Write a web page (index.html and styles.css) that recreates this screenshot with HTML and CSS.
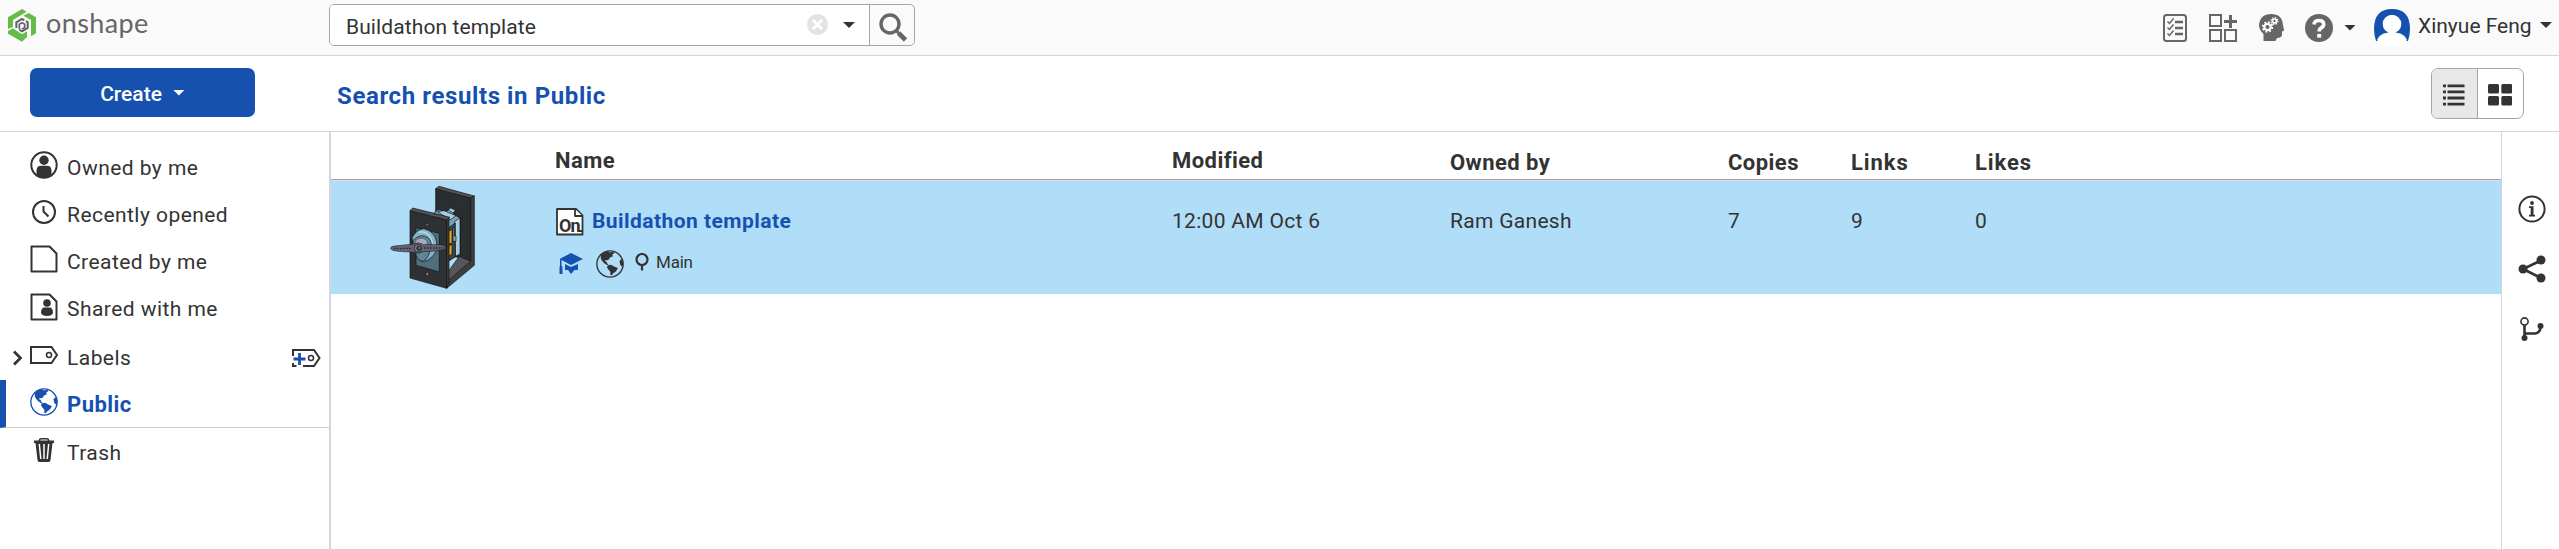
FILE: index.html
```html
<!DOCTYPE html>
<html lang="en">
<head>
<meta charset="utf-8">
<title>Onshape</title>
<link rel="stylesheet" href="styles.css">
</head>
<body>
<svg class="defs" aria-hidden="true">
  <symbol id="globe" viewBox="0 0 82 82">
    <circle cx="41" cy="41" r="38.5" fill="none" stroke="currentColor" stroke-width="4"/>
    <path fill="currentColor" d="M14 13 24 7 36 3 40 7 50 5 54 9 47 14 50 18 42 21 38 27 35 30 28 29 27 34 33 35 31 39 37 42 33 45 24 39 17 31 14 24z"/>
    <path fill="currentColor" d="M35 45 44 43 53 48 64 53 59 62 51 68 46 74 42 73 42 64 35 56 32 50z"/>
    <path fill="currentColor" d="M73 27 79 31 80 42 77 50 71 43 69 34z"/>
  </symbol>
</svg>

<header class="topbar">
  <div class="brand">
    <svg class="logo" width="28" height="33" viewBox="0 0 84 99">
      <path fill="#65bc46" d="M0 25 42 0 56 8 15 33V53L0 60z"/>
      <path fill="#65bc46" d="M62 12 84 25V73L69 82V33L46 20z"/>
      <path fill="#65bc46" d="M0 66 15 58 42 76 57 67V84L42 98 0 74z"/>
      <path fill="none" stroke="#606060" stroke-width="6" d="M25 57V40L42 30 49 34M54 36 59 40V57L42 67 34 62"/>
      <path fill="none" stroke="#606060" stroke-width="5" d="M34 60V46L42 41 50 46V56L42 60"/>
    </svg>
    <span class="wordmark">onshape</span>
  </div>
  <div class="search">
    <div class="search-input">
      <span class="query">Buildathon template</span>
      <svg class="clear" width="21" height="21" viewBox="0 0 21 21"><circle cx="10.5" cy="10.5" r="10.5" fill="#e3e3e3"/><path d="M6 6 15 15M15 6 6 15" stroke="#fff" stroke-width="3"/></svg>
      <i class="caret"></i>
    </div>
    <div class="search-button">
      <svg width="29" height="29" viewBox="0 0 29 29" fill="none" stroke="#666"><circle cx="11" cy="11" r="9" stroke-width="3.4"/><path d="M17 17.500 19.500 20" stroke-width="3"/><path d="M19.500 20 26.500 27" stroke-width="4.600"/></svg>
    </div>
  </div>
  <div class="account">
    <svg width="24" height="28" viewBox="0 0 24 28" fill="none" stroke="#666"><rect x="1" y="1" width="22" height="26" rx="2.500" stroke-width="2"/><path d="M4.500 7.500 6.500 9.500 10.500 4.500M4.500 13.500 6.500 15.500 10.500 10.500M4.500 19.500 6.500 21.500 10.500 16.500" stroke-width="1.500"/><path d="M12 8H20M12 14H20M12 20H20" stroke-width="2.600"/></svg>
    <svg class="apps" width="28" height="28" viewBox="0 0 28 28" fill="none" stroke="#666" stroke-width="2"><path d="M1 1H12V12H1zM1 16H12V27H1zM16 16H27V27H16z"/><path d="M21.500 1V14M15 7.500H28" stroke-width="3"/></svg>
    <svg class="learn" width="26" height="28" viewBox="0 0 26 28"><path fill="#666" d="M4.500 27V20Q0 16 0 11 1 0 12.500 0 23 0 24 11L25 16Q25 17 23 17.500V21Q23 23.500 18 24L16.500 27z"/><g fill="none" stroke="#fff"><circle cx="8.500" cy="13" r="3.200" stroke-width="2.200"/><circle cx="8.500" cy="13" r="4.800" stroke-width="1.800" stroke-dasharray="1.900 1.870"/><circle cx="15.500" cy="7" r="2" stroke-width="1.700"/><circle cx="15.500" cy="7" r="3.300" stroke-width="1.400" stroke-dasharray="1.300 1.290"/></g></svg>
    <svg class="help" width="28" height="28" viewBox="0 0 28 28"><circle cx="14" cy="14" r="14" fill="#666"/><path d="M9 10.500Q9.300 6.500 14 6.500 18.700 6.500 18.700 10.300 18.700 12.500 16.200 13.900 14.200 15 14.200 17.600" fill="none" stroke="#fff" stroke-width="3.600"/><path d="M12.200 20H16.200V23.600H12.200z" fill="#fff"/></svg>
    <i class="caret help-caret"></i>
    <svg class="avatar" width="36" height="37" viewBox="0 0 36 37"><path fill="#1651b0" d="M2 32Q0 26 0 20 0 0 18 0 36 0 36 20 36 26 34 32z"/><path fill="#fff" d="M3 31Q5 25 14 23.500H22Q31 25 33 31 30 37 18 37 6 37 3 31z"/><circle cx="18" cy="15" r="9.300" fill="#fff"/></svg>
    <span class="username">Xinyue Feng</span>
    <i class="caret"></i>
  </div>
</header>

<div class="toolbar">
  <button class="create">Create<i class="caret light"></i></button>
  <h1 class="heading">Search results in Public</h1>
  <div class="view-toggle">
    <div class="view active"><svg width="22" height="22" viewBox="0 0 22 22" stroke="#333" stroke-width="2.800"><path d="M0 1.800H3M0 7.900H3M0 14H3M0 20.100H3M4.500 1.800H21.500M4.500 7.900H21.500M4.500 14H21.500M4.500 20.100H21.500"/></svg></div>
    <div class="view"><svg width="24" height="22" viewBox="0 0 24 22" fill="#333"><rect width="11" height="9.500" rx="1.500"/><rect x="13.300" width="11" height="9.500" rx="1.500"/><rect y="12" width="11" height="9.500" rx="1.500"/><rect x="13.300" y="12" width="11" height="9.500" rx="1.500"/></svg></div>
  </div>
</div>

<div class="main">
  <nav class="sidebar">
    <div class="item"><span class="icon"><svg width="28" height="28" viewBox="0 0 28 28"><circle cx="14" cy="14" r="12.700" fill="none" stroke="#333" stroke-width="2"/><circle cx="14" cy="9.300" r="4.700" fill="#333"/><path fill="#333" d="M6.500 24V20Q6.500 14.800 11 14.800H17Q21.500 14.800 21.500 20V24Q18 27 14 27 10 27 6.500 24z"/></svg></span>Owned by me</div>
    <div class="item"><span class="icon"><svg width="28" height="28" viewBox="0 0 28 28" fill="none" stroke="#333" stroke-width="2"><circle cx="14" cy="14" r="11"/><path d="M13.500 8V13.500L18.500 18.500"/></svg></span>Recently opened</div>
    <div class="item"><span class="icon"><svg width="28" height="28" viewBox="0 0 28 28" fill="none" stroke="#333" stroke-width="2" stroke-linejoin="round"><path d="M1.500 1.500H19.500L26.500 8.500V26.500H1.500z"/></svg></span>Created by me</div>
    <div class="item"><span class="icon"><svg width="28" height="28" viewBox="0 0 28 28"><path fill="none" stroke="#333" stroke-width="2" stroke-linejoin="round" d="M1.500 1.500H19.500L26.500 8.500V26.500H1.500z"/><circle cx="17" cy="10" r="3.800" fill="#333"/><path fill="#333" d="M11 20Q11 14.500 14.500 14.500H19.500Q23 14.500 23 20 22 23 17 23 12 23 11 20z"/></svg></span>Shared with me</div>
    <div class="item labels">
      <svg class="chevron" width="10" height="16" viewBox="0 0 10 16" fill="none" stroke="#333" stroke-width="2.700"><path d="M1 1.500 7.500 8 1 14.500"/></svg>
      <span class="icon"><svg width="28" height="18" viewBox="0 0 28 18" fill="none" stroke="#333" stroke-width="2"><path d="M1 1H21.500L27 9 21.500 17H1z"/><circle cx="19" cy="9" r="2.500" stroke-width="1.500"/></svg></span>Labels
      <svg class="add-label" width="29" height="19" viewBox="0 0 29 19" fill="none" stroke="#333" stroke-width="2"><path d="M1 7V1H22L27.500 9 22 17H11M1 14V17H4.500"/><circle cx="19" cy="9" r="2.500" stroke-width="1.500"/><path d="M7.500 4V16M1.500 10H13.500" stroke="#1651b0" stroke-width="2.800"/></svg>
    </div>
    <div class="item selected"><span class="icon"><svg width="28" height="28"><use href="#globe"/></svg></span>Public</div>
    <div class="item trash"><span class="icon"><svg width="20" height="24" viewBox="0 0 20 24"><path fill="none" stroke="#333" stroke-width="1.500" d="M5.500 3V2Q5.500 .8 7 .8H13Q14.500 .8 14.500 2V3"/><path fill="#333" d="M0 2.500H20V5H18.500L16.500 22Q16.300 24 14.500 24H5.500Q3.700 24 3.500 22L1.500 5H0z"/><path stroke="#fff" stroke-width="1.500" d="M5.300 6 6.800 21M10 6V21M14.700 6 13.200 21"/></svg></span>Trash</div>
  </nav>

  <section class="results">
    <div class="grid head">
      <span></span><span>Name</span><span>Modified</span><span class="low">Owned by</span><span class="low">Copies</span><span class="low wide">Links</span><span class="low wide">Likes</span>
    </div>
    <div class="grid row">
      <div class="thumb">
        <svg width="110" height="112" viewBox="0 9 330 336" stroke="#111" stroke-width="2" stroke-linejoin="round">
          <path fill="#2b2e30" d="M167 32 272 60V250L240 240 167 220z"/>
          <path fill="#505356" d="M167 32 177 25 283 54 272 60z"/>
          <path fill="#55575b" d="M205 318V280L238 235 272 250z"/>
          <path fill="#3c3f42" d="M272 60 283 54V262L200 331V312L272 250z"/>
          <path fill="#7ba3b8" d="M160 106 175 95 200 100 213 90 226 97 220 108 240 120V228L208 248 200 130z"/>
          <path fill="#a4cfe2" d="M173 101 192 98 228 113 210 126zM205 95 212 90 226 97 219 105z"/>
          <path fill="#a4cfe2" d="M224 130 240 120V228L226 235z"/>
          <path fill="#36464f" d="M205 150 226 135V235L205 248z"/>
          <path fill="#e7a51c" d="M206 160 216 154V194L206 199zM206 204 216 199V228L206 235z"/>
          <path fill="#86abba" d="M219 150 223 147V174H228V190H219z"/>
          <path fill="#2e3133" d="M90 98 200 126V331L90 300z"/>
          <path fill="#505356" d="M90 98 98 90 210 118 200 126z"/>
          <path fill="#3d4043" d="M200 126 207 120V312L200 331z"/>
          <path fill="#506f7d" d="M108 149 178 166V282L108 262z"/>
          <path fill="#87b3c7" d="M96 180Q108 154 132 152 165 160 170 193V216Q155 246 132 250 115 249 108 232z"/>
          <path fill="#5f8599" d="M98 188Q122 163 146 180 160 195 150 220 143 244 130 250 112 248 108 230z"/>
          <path fill="none" stroke="#b7deee" stroke-width="4" d="M116 163Q145 154 158 196"/>
          <ellipse cx="124" cy="193" rx="18" ry="12" fill="#aaa9c1" stroke-width="1"/>
          <path fill="#656273" stroke-width="1.500" d="M32 212Q31 205 43 204L102 198Q115 190 130 200L186 200Q201 204 198 212 195 218 130 221 116 230 102 223L55 220Q35 218 32 212z"/>
          <path fill="none" stroke="#191922" stroke-width="4" stroke-linecap="round" stroke-dasharray="1 8" d="M44 211H98M134 210H192"/>
          <circle cx="114" cy="211" r="11" fill="#8a8799"/><circle cx="116" cy="211" r="6" fill="#253c42"/><circle cx="118" cy="210" r="2" fill="#a8dce8" stroke="none"/>
          <circle cx="142" cy="140" r="5" fill="#666"/><circle cx="142" cy="288" r="5" fill="#888"/>
        </svg>
      </div>
      <div class="name-cell">
        <div class="doc-title">
          <span class="doc-icon">
            <svg width="28" height="28" viewBox="0 0 28 28" fill="#fff" stroke="#333" stroke-width="1.800" stroke-linejoin="round"><path d="M1 1H20L26.500 7.500V26.500H1z"/><path d="M19 1V8H26.500"/></svg>
            <span class="doc-mark">On</span>
            <i class="doc-tail"></i>
          </span>
          <a class="doc-link">Buildathon template</a>
        </div>
        <div class="doc-meta">
          <svg class="cap" width="26" height="22" viewBox="0 0 26 22" fill="#1651b0"><path d="M1.500 6 13 0 25 6 13 12z"/><path d="M7 11 13 14 20 11V17L16.500 17 13 21 10 17H7z"/><path d="M2 6H3.500V12L4.500 15V21H1.500V15L2 12z"/></svg>
          <svg class="world" width="28" height="28"><use href="#globe"/></svg>
          <svg class="pin" width="14" height="18" viewBox="0 0 14 18" fill="none" stroke="#333" stroke-width="2.200"><circle cx="7" cy="6.500" r="5.500"/><path d="M7 11.500V17.500"/></svg>
          <span class="branch">Main</span>
        </div>
      </div>
      <span class="value">12:00 AM Oct 6</span>
      <span class="value">Ram Ganesh</span>
      <span class="value">7</span>
      <span class="value">9</span>
      <span class="value">0</span>
    </div>
  </section>

  <aside class="rail">
    <svg width="28" height="28" viewBox="0 0 28 28"><circle cx="14" cy="14" r="12.600" fill="none" stroke="#333" stroke-width="2"/><circle cx="14" cy="8" r="1.900" fill="#333"/><path fill="#333" d="M11 11.300H15.500V19.800H17V21.500H11V19.800H12.700V13H11z"/></svg>
    <svg width="28" height="28" viewBox="0 0 28 28"><path d="M23 5.500 5 14 23 23" fill="none" stroke="#333" stroke-width="2.600"/><circle cx="5" cy="14" r="4.500" fill="#333"/><circle cx="23" cy="5" r="4.500" fill="#333"/><circle cx="23" cy="23" r="4.500" fill="#333"/></svg>
    <svg width="28" height="28" viewBox="0 0 28 28" fill="none" stroke="#333"><circle cx="6.500" cy="6.500" r="3.600" stroke-width="1.600"/><path d="M6.500 10V23M6.500 18.500H17Q22.500 18 22.500 11" stroke-width="2.600"/><circle cx="6.500" cy="23" r="3" fill="#333" stroke="none"/><circle cx="22.500" cy="11" r="3" fill="#333" stroke="none"/></svg>
  </aside>
</div>
</body>
</html>
```
FILE: styles.css
```css
* { box-sizing: border-box; }
body {
  margin: 0;
  height: 549px;
  display: flex;
  flex-direction: column;
  overflow: hidden;
  background: #fff;
  color: #333;
  font: 21px/30px Roboto, "Liberation Sans", sans-serif;
  white-space: nowrap;
}
svg { display: block; flex: none; }
.defs { width: 0; height: 0; position: absolute; }
.caret {
  flex: none;
  width: 12px;
  height: 6px;
  background: #333;
  clip-path: polygon(0 0, 100% 0, 50% 100%);
}
.caret.light { background: #fff; }

.topbar {
  height: 56px;
  flex: none;
  display: flex;
  background: #fafafa;
  border-bottom: 1px solid #d0d7dc;
}
.brand { width: 329px; display: flex; padding: 9px 0 0 8px; }
.wordmark {
  margin: -2px 0 0 10px;
  font: 27px/32px Lato, sans-serif;
  letter-spacing: 0.4px;
  color: #666;
}
.search {
  width: 586px;
  height: 42px;
  margin-top: 4px;
  display: flex;
  border: 1px solid #a5a5a5;
  border-radius: 5px;
  overflow: hidden;
}
.search-input { flex: 1; display: flex; align-items: center; background: #fff; padding-right: 14px; }
.query { flex: 1; padding: 3px 0 0 16px; letter-spacing: 0.1px; }
.clear { margin: 0 15px 2px 0; }
.search-button { width: 45px; border-left: 1px solid #a5a5a5; padding: 8px 0 0 9px; }
.account { margin-left: auto; display: flex; align-items: center; padding-right: 7px; }
.apps, .learn { margin-left: 22px; }
.help { margin-left: 20px; }
.help-caret { margin-left: 11px; }
.avatar { margin-left: 18px; }
.username { width: 122px; margin-left: 8px; padding-bottom: 3px; }
.username + .caret { margin-bottom: 5px; }

.toolbar {
  height: 76px;
  flex: none;
  display: flex;
  align-items: flex-start;
  padding: 12px 35px 0 30px;
  border-bottom: 1px solid #d0d7dc;
}
.create {
  width: 225px;
  height: 49px;
  display: flex;
  align-items: center;
  justify-content: center;
  gap: 11px;
  padding: 2px 0 0;
  border: 0;
  border-radius: 7px;
  background: #1651b0;
  color: #fff;
  font: 500 21px/30px Roboto, sans-serif;
}
.create .caret { margin-bottom: 2px; }
.heading {
  margin: 12px 0 0 82px;
  font-size: 24px;
  line-height: 32px;
  font-weight: 700;
  letter-spacing: 0.6px;
  color: #1651b0;
}
.view-toggle {
  width: 93px;
  height: 51px;
  margin-left: auto;
  display: flex;
  border: 1px solid #a5a5a5;
  border-radius: 7px;
  overflow: hidden;
}
.view { flex: 1; display: flex; align-items: center; justify-content: center; padding: 3px 1px 0 0; }
.view.active { padding-right: 0; background: #e8e8e8; border-right: 1px solid #a5a5a5; }

.main { flex: 1; display: flex; }
.sidebar { width: 331px; padding-top: 12px; border-right: 2px solid #d0d7dc; }
.item {
  height: 47.2px;
  display: flex;
  align-items: center;
  padding-left: 30px;
  letter-spacing: 0.45px;
}
.icon { width: 28px; margin: -5px 9px 0 0; display: flex; justify-content: center; }
.labels { padding: 3px 0 0 13px; }
.chevron { margin-right: 7px; }
.add-label { margin: 2px 8px 0 auto; }
.selected {
  height: 48px;
  padding: 3px 0 0 24px;
  border-left: 6px solid #1651b0;
  border-bottom: 1px solid #c5cacd;
  color: #1651b0;
  font-size: 22px;
  font-weight: 700;
}
.trash { height: 50px; }

.results { flex: 1; }
.grid { display: grid; grid-template-columns: 224px 617px 278px 278px 123px 124px 1fr; }
.head {
  height: 48px;
  margin-bottom: 1px;
  padding-top: 14px;
  border-bottom: 1px solid #a5a5a5;
  box-shadow: 0 1px #dedede;
  font-size: 22px;
  font-weight: 700;
  letter-spacing: 0.45px;
}
.low { padding-top: 2px; }
.wide { letter-spacing: 0.9px; }
.row { height: 113px; background: #b0ddf7; letter-spacing: 0.3px; }
.thumb { padding-left: 49px; }
.value { padding-top: 25px; }
.name-cell { padding: 27px 0 0 1px; }
.doc-title { display: flex; gap: 8px; height: 28px; }
.doc-icon { width: 28px; position: relative; }
.doc-mark {
  position: absolute;
  left: 3px;
  top: 8px;
  font: 700 18px/20px Roboto, sans-serif;
  letter-spacing: -0.8px;
}
.doc-tail { position: absolute; left: 22px; top: 22px; width: 4px; height: 2px; background: #333; }
.doc-link { margin-top: -2px; font-weight: 700; letter-spacing: 0.45px; color: #1651b0; }
.doc-meta { display: flex; height: 32px; margin-top: 13px; padding-left: 2px; }
.cap { margin-top: 4px; }
.world { margin: 1px 0 0 12px; }
.pin { margin: 4px 0 0 11px; }
.branch { margin: 1px 0 0 7px; font-size: 17px; line-height: 24px; letter-spacing: -0.2px; }

.rail {
  width: 58px;
  display: flex;
  flex-direction: column;
  gap: 32px;
  padding: 63px 0 0 16px;
  border-left: 1px solid #d0d7dc;
}
```
